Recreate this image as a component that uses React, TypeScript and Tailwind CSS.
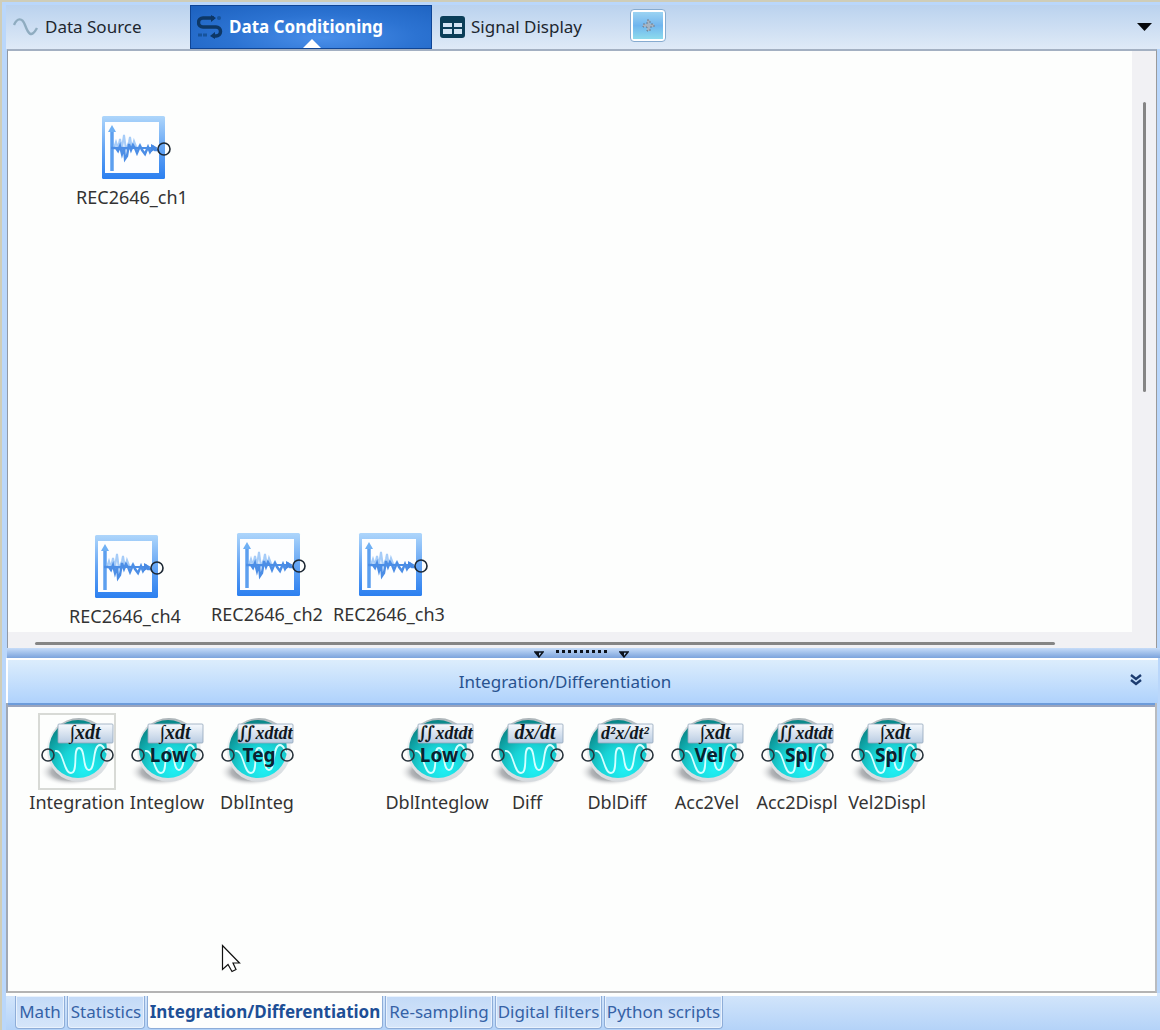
import { useState } from 'react'
import type { ReactNode } from 'react'
import { clsx } from 'clsx'

interface SignalNode {
  name: string
  place: string
}

interface Tool {
  name: string
  formula: string
  tag?: string
  gapBefore?: boolean
}

const NODES: Array<SignalNode> = [
  { name: 'REC2646_ch1', place: 'left-[64px] top-[64px]' },
  { name: 'REC2646_ch4', place: 'left-[57px] top-[483px]' },
  { name: 'REC2646_ch2', place: 'left-[199px] top-[481px]' },
  { name: 'REC2646_ch3', place: 'left-[321px] top-[481px]' },
]

const TOOLS: Array<Tool> = [
  { name: 'Integration', formula: '∫xdt' },
  { name: 'Integlow', formula: '∫xdt', tag: 'Low' },
  { name: 'DblInteg', formula: '∬xdtdt', tag: 'Teg' },
  { name: 'DblInteglow', formula: '∬xdtdt', tag: 'Low', gapBefore: true },
  { name: 'Diff', formula: 'dx/dt' },
  { name: 'DblDiff', formula: 'd²x/dt²' },
  { name: 'Acc2Vel', formula: '∫xdt', tag: 'Vel' },
  { name: 'Acc2Displ', formula: '∬xdtdt', tag: 'Spl' },
  { name: 'Vel2Displ', formula: '∫xdt', tag: 'Spl' },
]

const CATEGORIES = [
  { name: 'Math', width: 'w-[50px]' },
  { name: 'Statistics', width: 'w-[78px]' },
  { name: 'Integration/Differentiation', width: 'w-[236px]' },
  { name: 'Re-sampling', width: 'w-[108px]' },
  { name: 'Digital filters', width: 'w-[107px]' },
  { name: 'Python scripts', width: 'w-[119px]' },
]

export default function App() {
  const [selected, setSelected] = useState('Integration')
  const [category, setCategory] = useState('Integration/Differentiation')

  return (
    <div className="flex min-h-screen flex-col border-t-2 border-l-2 border-t-[#cfcdb8] border-l-[#cfcdb8] bg-[#bad7fb] pt-[3px] pl-1 font-['Noto_Sans','Open_Sans',sans-serif] text-lg leading-6 text-[#333]">
      <TopTabs />

      <main className="flex flex-1 flex-col">
        <Canvas />
        <Splitter />

        <section className="flex flex-col" aria-label={category}>
          <header className="relative mr-0.5 flex h-[45px] items-center justify-center border-t-2 border-l-2 border-white bg-linear-to-b from-[#dcedfc] to-[#afd2fc] pr-9">
            <h2 className="text-[17px] text-[#28528f]">
              Integration/Differentiation
            </h2>
            <button
              type="button"
              aria-label="Collapse panel"
              className="absolute top-2.5 right-3 p-1"
            >
              <svg width="12" height="12" viewBox="0 0 12 12">
                <path
                  d="M1 1l5 4 5-4M1 6l5 4 5-4"
                  fill="none"
                  stroke="#1c3c70"
                  strokeWidth="2.4"
                />
              </svg>
            </button>
          </header>

          <div className="mr-[3px] h-[290px] border-r-2 border-b-2 border-l-2 border-r-[#b9bcc0] border-b-[#b4b4b4] border-l-[#a0a8b4] bg-[#fdfefd]">
            <div className="h-1 border-t-2 border-t-[#6c9cdb] bg-[#9aa5be]" />
            <ul className="flex flex-wrap pt-1.5 pl-6">
              {TOOLS.map((tool) => (
                <li
                  key={tool.name}
                  className={clsx('w-[90px]', tool.gapBefore && 'ml-[90px]')}
                >
                  <button
                    type="button"
                    onClick={() => setSelected(tool.name)}
                    className="flex w-full flex-col items-center"
                  >
                    <span
                      className={clsx(
                        'flex h-[77px] w-[78px] items-center justify-center border-2',
                        selected === tool.name
                          ? 'border-[#d8dad6]'
                          : 'border-transparent',
                      )}
                    >
                      <ToolIcon formula={tool.formula} tag={tool.tag} />
                    </span>
                    <span className="whitespace-nowrap">{tool.name}</span>
                  </button>
                </li>
              ))}
            </ul>
          </div>
        </section>
      </main>

      <CategoryTabs value={category} onChange={setCategory} />
      <Pointer />
    </div>
  )
}

function TopTabs() {
  return (
    <nav className="flex h-11 items-stretch bg-linear-to-b from-[#bad2ee] to-[#dfeaf7] pl-px text-[17px] text-[#20262e]">
      <TabButton className="w-[183px] pl-1.5">
        <svg width="26" height="20" viewBox="0 0 26 20">
          <path
            d="M1 8C4 1 9 0 12 8s6 14 12 3"
            fill="none"
            stroke="#8facc0"
            strokeWidth="2.4"
          />
        </svg>
        Data Source
      </TabButton>
      <TabButton
        active
        className="w-[242px] border border-[#0f4595] bg-radial-[at_55%_75%] from-[#4a8fea] via-[#2c73d2] to-[#1c61bf] pl-1.5 font-bold text-white"
      >
        <FlowIcon />
        Data Conditioning
        <svg
          className="absolute bottom-0 left-28"
          width="18"
          height="9"
          viewBox="0 0 18 9"
        >
          <path d="M0 9L9 0l9 9z" fill="#fff" />
        </svg>
      </TabButton>
      <TabButton className="w-[194px] pl-2">
        <svg width="25" height="22" viewBox="0 0 25 22">
          <rect width="25" height="22" rx="3" fill="#0b3e58" />
          <path
            d="M3 7h9v4H3zM14 7h8v4h-8zM3 13h9v5H3zM14 13h8v5h-8z"
            fill="#d4e5f5"
          />
        </svg>
        Signal Display
      </TabButton>
      <button
        type="button"
        aria-label="Add display"
        className="mt-1 ml-1 flex h-[33px] w-9 items-center justify-center rounded-sm border border-[#86abd0] bg-white p-0.5"
      >
        <span className="flex h-full w-full items-center justify-center bg-linear-to-b from-[#9bd3f2] via-[#70b5ee] to-[#8edbec]">
          <svg width="13" height="13" viewBox="0 0 13 13">
            <path d="M5 1h3v4h4v3H8v4H5V8H1V5h4z" fill="#a4b3c3" />
            <path
              d="M5 1h3v4h4v3H8v4H5V8H1V5h4z"
              fill="none"
              stroke="#6c7f92"
              strokeDasharray="2 2"
            />
          </svg>
        </span>
      </button>
      <button
        type="button"
        aria-label="Tab list"
        className="mr-2 ml-auto flex items-center"
      >
        <svg width="15" height="8" viewBox="0 0 15 8">
          <path d="M0 0h15L7.500 8z" fill="#05080c" />
        </svg>
      </button>
    </nav>
  )
}

function TabButton({
  active = false,
  className,
  children,
}: {
  active?: boolean
  className?: string
  children: ReactNode
}) {
  return (
    <button
      type="button"
      aria-current={active ? 'page' : undefined}
      className={clsx(
        'relative flex items-center gap-1.5 whitespace-nowrap',
        className,
      )}
    >
      {children}
    </button>
  )
}

function FlowIcon() {
  return (
    <svg width="26" height="24" viewBox="0 0 26 24">
      <path
        d="M17 3H6a4 4 0 0 0 0 9h13a4.500 4.500 0 0 1 0 9h-2"
        fill="none"
        stroke="#0d3766"
        strokeWidth="3.500"
      />
      <path d="M14 0l5 3-5 4zM18 17l-5 4 5 3z" fill="#0d3766" />
      <circle cx="22" cy="3" r="2" fill="#17539b" />
      <path d="M1 20h9" stroke="#17539b" strokeWidth="3" strokeDasharray="4 1" />
    </svg>
  )
}

/* Work area with its two thin scroll bars */
function Canvas() {
  return (
    <section
      aria-label="Signal canvas"
      className="mr-[3px] ml-px grid flex-1 grid-cols-[1fr_24px] grid-rows-[1fr_16px] border-t-2 border-r border-l border-t-[#a3b0c2] border-r-[#9a9a9a] border-l-[#8f98a6] bg-[#f1f1f4]"
    >
      <div className="relative bg-[#fdfefd]">
        {NODES.map((node) => (
          <div
            key={node.name}
            className={clsx(
              'absolute flex w-[120px] flex-col items-center',
              node.place,
            )}
          >
            <SignalIcon />
            <span className="whitespace-nowrap">{node.name}</span>
          </div>
        ))}
      </div>
      <div className="flex justify-center pt-[51px]">
        <span className="h-[290px] w-[3px] rounded-full bg-[#858585]" />
      </div>
      <div className="flex items-center pt-1.5 pr-[77px] pl-[27px]">
        <span className="h-[3px] w-full rounded-full bg-[#858585]" />
      </div>
    </section>
  )
}

function Splitter() {
  return (
    <div className="ml-px flex h-2.5 items-start justify-center gap-3 bg-linear-to-b from-[#c6dcf8] to-[#7ba3dc] pr-1">
      <SplitterArrow />
      <svg className="mt-0.5" width="51" height="3" viewBox="0 0 51 3">
        <path
          d="M0 1.500h51"
          stroke="#0c121b"
          strokeWidth="3"
          strokeDasharray="3 3"
        />
      </svg>
      <SplitterArrow />
    </div>
  )
}

function SplitterArrow() {
  return (
    <svg className="mt-[3px]" width="10" height="7" viewBox="0 0 10 7">
      <path
        d="M1 1h8L5 6z"
        fill="#a5c5ef"
        stroke="#0c121b"
        strokeWidth="1.500"
      />
      <path d="M1 1h4v5z" fill="#0c121b" />
    </svg>
  )
}

function CategoryTabs({
  value,
  onChange,
}: {
  value: string
  onChange: (name: string) => void
}) {
  return (
    <div className="bg-linear-to-b from-[#d4e6fb] to-[#b4d3f8] pb-px text-[17px]">
      <div className="mr-[3px] h-[3px] bg-[#fdfefd]" />
      <div role="tablist" className="flex h-[33px] gap-0.5 pl-[9px]">
        {CATEGORIES.map((c) => (
          <button
            key={c.name}
            type="button"
            role="tab"
            aria-selected={value === c.name}
            onClick={() => onChange(c.name)}
            className={clsx(
              'flex items-center justify-center rounded-b-sm border-r border-b border-l border-[#8eadd8] whitespace-nowrap',
              c.width,
              value === c.name
                ? 'bg-[#fdfefd] font-bold text-[#1d4f96]'
                : 'bg-linear-to-b from-[#c3daf7] to-[#d6e6fa] text-[#3562a6] inset-ring inset-ring-[#e9f2fd]',
            )}
          >
            {c.name}
          </button>
        ))}
      </div>
    </div>
  )
}

function SignalIcon() {
  return (
    <svg
      width="64"
      height="70"
      viewBox="0 0 64 70"
      className="shrink-0 overflow-visible"
      aria-hidden="true"
    >
      <defs>
        <linearGradient id="frame" x1="0" y1="0" x2="0" y2="1">
          <stop offset="0" stopColor="#aed6fb" />
          <stop offset="0.500" stopColor="#65a5f4" />
          <stop offset="1" stopColor="#2c80f0" />
        </linearGradient>
      </defs>
      <rect x="2" y="1" width="63" height="63" rx="1.500" fill="url(#frame)" />
      <rect x="5" y="7" width="54" height="51" fill="#fdfeff" />
      <path d="M12 56V14" stroke="#5c9fef" strokeWidth="3.500" fill="none" />
      <path d="M8 17l4-7 4 7z" fill="#6fb0f4" />
      <path
        d="M14 33l2-6 2 6 2-9 2 9 2-13 2 15 3-8 1-5 2 12 2-8 3 8 3-4 3 6"
        stroke="#a6ccf8"
        strokeWidth="2"
        fill="none"
      />
      <path
        d="M11 33h5l2 3 2-5 2 8 2-7 1 12 2-3 2-12 2 6 2-5 2 3 2 5 3-7 2 4 3 4 3-7 2 5 3-5 2 3h3"
        stroke="#4c8ee6"
        strokeWidth="2.400"
        fill="none"
      />
      <path d="M11 33h44" stroke="#4c8ee6" strokeWidth="2" />
      <path d="M51 29l7 4-7 4z" fill="#4789e3" />
      <circle
        cx="64"
        cy="34"
        r="6"
        fill="none"
        stroke="#1c2733"
        strokeWidth="1.600"
      />
    </svg>
  )
}

function ToolIcon({ formula, tag }: { formula: string; tag?: string }) {
  return (
    <svg
      width="78"
      height="78"
      viewBox="0 0 78 78"
      className="shrink-0"
      aria-hidden="true"
    >
      <defs>
        <radialGradient id="ball" cx="0.600" cy="0.850" r="0.900">
          <stop offset="0" stopColor="#1ff0f4" />
          <stop offset="0.450" stopColor="#19d3d6" />
          <stop offset="1" stopColor="#067b7c" />
        </radialGradient>
        <radialGradient id="shade">
          <stop offset="0" stopColor="#6f757a" />
          <stop offset="0.600" stopColor="#b4b7ba" />
          <stop offset="1" stopColor="#fff" stopOpacity="0" />
        </radialGradient>
        <linearGradient id="rim" x1="0" y1="0" x2="0" y2="1">
          <stop offset="0" stopColor="#a9b2b6" />
          <stop offset="0.300" stopColor="#eef2f4" />
          <stop offset="1" stopColor="#d5dade" />
        </linearGradient>
        <linearGradient id="plate" x1="0" y1="0" x2="0" y2="1">
          <stop offset="0" stopColor="#f6f9fd" />
          <stop offset="1" stopColor="#b9cce2" />
        </linearGradient>
      </defs>
      <ellipse cx="32" cy="59" rx="31" ry="14" fill="url(#shade)" />
      <circle cx="41" cy="37" r="32" fill="url(#rim)" />
      <circle cx="40" cy="36" r="29" fill="url(#ball)" />
      <path
        d="M17 38C26 36 25 60 33 60S34 35 41 35s3 22 10 22 3-25 11-25c4 0 4 5 7 8"
        fill="none"
        stroke="#d5ffff"
        strokeWidth="1.800"
      />
      <rect
        x="20"
        y="11"
        width="55"
        height="19"
        rx="1"
        fill="url(#plate)"
        stroke="#93a6ba"
        strokeWidth="0.800"
      />
      <text
        x="47"
        y="26"
        textAnchor="middle"
        className={clsx(
          "fill-[#101820] font-['Liberation_Serif','DejaVu_Serif',serif] font-bold italic",
          formula.length > 5 ? 'text-lg' : 'text-xl',
        )}
      >
        {formula}
      </text>
      {tag && (
        <text
          x="41"
          y="49"
          textAnchor="middle"
          className="fill-[#0b2230] font-['Noto_Sans',sans-serif] text-[19px] font-bold"
        >
          {tag}
        </text>
      )}
      <g fill="none" stroke="#28333c" strokeWidth="1.600">
        <circle cx="10" cy="42" r="6" />
        <circle cx="69" cy="42" r="6" />
      </g>
    </svg>
  )
}

function Pointer() {
  return (
    <svg
      className="pointer-events-none absolute top-[944px] left-[221px]"
      width="20"
      height="29"
      viewBox="0 0 20 29"
      aria-hidden="true"
    >
      <path
        d="M1.500 1.500v24l5.500-5 4 7 4-2-3-6.500h6.500z"
        fill="#fff"
        stroke="#111"
        strokeWidth="1.200"
      />
    </svg>
  )
}
